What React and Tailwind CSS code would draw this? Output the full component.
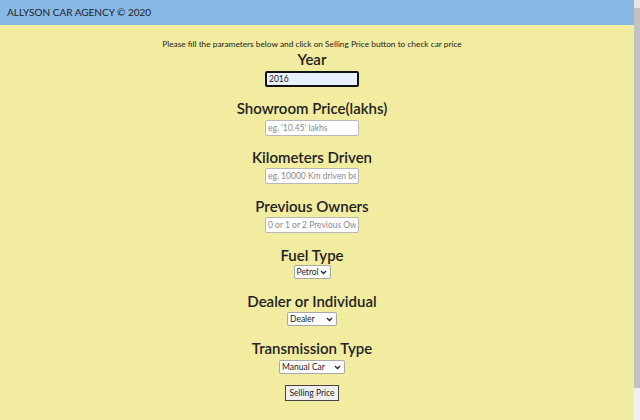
import React from "react";

const font = { fontFamily: "Lato, 'Open Sans', sans-serif" };

function Heading({ children, mt }) {
  return (
    <div
      className={
        "h-[18px] leading-[18px] text-[15px] font-semibold text-[#222] whitespace-nowrap " + mt
      }
    >
      {children}
    </div>
  );
}

function TextInput({ placeholder, value, focused, mt }) {
  return (
    <input
      readOnly
      defaultValue={value}
      placeholder={placeholder}
      className={
        "block w-[94px] h-[16px] px-[2px] text-[8.5px] leading-[12px] text-[#222] placeholder:text-[#8a8a8a] [font-family:Lato,sans-serif] outline-none shrink-0 " +
        mt +
        " " +
        (focused
          ? "bg-[#e8f0fe] border-2 border-[#111] rounded-[2px]"
          : "bg-white border border-[#b8b8b8] rounded-[2px]")
      }
    />
  );
}

function Select({ label, width, mt }) {
  return (
    <div
      className={
        "h-[14px] shrink-0 bg-white border border-[#a8a8a8] rounded-[2px] flex items-center justify-between pl-[2px] pr-[3px] text-[8.5px] text-[#222] " +
        width +
        " " +
        mt
      }
    >
      <span>{label}</span>
      <svg width="7" height="5" viewBox="0 0 7 5">
        <path d="M1 1 L3.5 3.5 L6 1" stroke="#222" strokeWidth="1.3" fill="none" />
      </svg>
    </div>
  );
}

export default function App() {
  return (
    <div className="w-[640px] h-[420px] flex overflow-hidden bg-[#f1ec9f]" style={font}>
      <div className="w-[634px] h-full flex flex-col">
        <div className="h-[25px] shrink-0 bg-[#88b9e5] flex items-center pl-[7px] text-[10px] text-[#222]">
          ALLYSON CAR AGENCY © 2020
        </div>
        <div className="flex-1 flex flex-col items-center pr-[10px]">
          <div className="mt-[13px] h-[12px] text-[8.3px] leading-[12px] text-[#222] whitespace-nowrap">
            Please fill the parameters below and click on Selling Price button to check car price
          </div>
          <Heading mt="mt-0">Year</Heading>
          <TextInput value="2016" focused mt="mt-[3px]" />
          <Heading mt="mt-[12px]">Showroom Price(lakhs)</Heading>
          <TextInput placeholder="eg. '10.45' lakhs" mt="mt-[3px]" />
          <Heading mt="mt-[12px]">Kilometers Driven</Heading>
          <TextInput placeholder="eg. 10000 Km driven before" mt="mt-[2px]" />
          <Heading mt="mt-[13px]">Previous Owners</Heading>
          <TextInput placeholder="0 or 1 or 2 Previous Owners" mt="mt-[2px]" />
          <Heading mt="mt-[13px]">Fuel Type</Heading>
          <Select label="Petrol" width="w-[37px]" mt="mt-[1px]" />
          <Heading mt="mt-[13px]">Dealer or Individual</Heading>
          <Select label="Dealer" width="w-[50px]" mt="mt-[2px]" />
          <Heading mt="mt-[13px]">Transmission Type</Heading>
          <Select label="Manual Car" width="w-[66px]" mt="mt-[3px]" />
          <div className="mt-[11px] h-[16px] shrink-0 px-[3px] bg-[#efefef] border border-[#444] flex items-center text-[8.5px] text-[#222]">
            Selling Price
          </div>
        </div>
      </div>
      <div className="w-[6px] h-full flex flex-col bg-[#f0f0f0]">
        <div className="h-[8px] bg-[#e6e6e6]" />
        <div className="h-[380px] bg-[#c2c2c2]" />
      </div>
    </div>
  );
}
